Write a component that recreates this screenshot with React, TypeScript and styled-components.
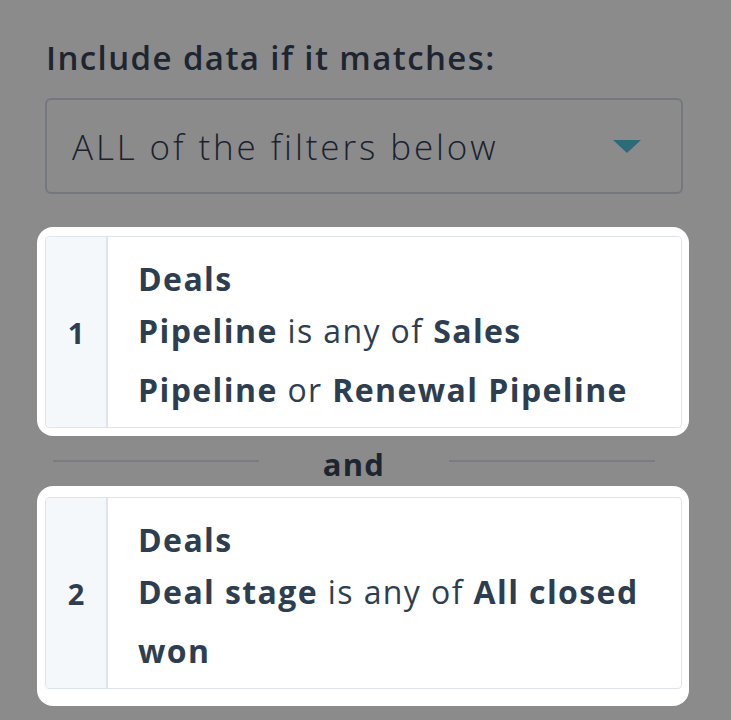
import React from 'react';
import styled, { createGlobalStyle } from 'styled-components';

const GlobalStyle = createGlobalStyle`
  html, body {
    margin: 0;
    padding: 0;
    background: #8b8b8b;
  }
  body {
    font-family: "Open Sans", "Noto Sans", sans-serif;
  }
`;

const Page = styled.div`
  width: 731px;
  height: 720px;
  box-sizing: border-box;
  padding: 35px 42px 0 37px;
  overflow: hidden;
  display: flex;
  flex-direction: column;
`;

const Heading = styled.h2`
  margin: 0 0 0 9px;
  font-size: 33px;
  line-height: 46px;
  font-weight: 600;
  letter-spacing: 1.4px;
  color: #1d2531;
`;

const Select = styled.div`
  margin: 17px 6px 33px 8px;
  height: 96px;
  box-sizing: border-box;
  border: 2px solid #74787e;
  border-radius: 6px;
  display: flex;
  align-items: center;
  justify-content: space-between;
  padding: 0 40px 0 25px;
  font-size: 35px;
  font-weight: 300;
  letter-spacing: 2.9px;
  color: #1a222d;
`;

const Caret = styled.span`
  width: 0;
  height: 0;
  border-left: 14px solid transparent;
  border-right: 14px solid transparent;
  border-top: 13px solid #2c6b78;
`;

const Highlight = styled.div<{ $pad: string }>`
  background: #fff;
  border-radius: 16px;
  padding: ${(p) => p.$pad};
`;

const FilterBox = styled.div`
  display: flex;
  border: 1.5px solid #dfe3eb;
  border-radius: 4px;
  overflow: hidden;
`;

const Index = styled.div`
  width: 60px;
  flex: none;
  background: #f5f8fa;
  border-right: 2px solid #dfe3eb;
  display: flex;
  align-items: center;
  justify-content: center;
  font-size: 29px;
  font-weight: 700;
  color: #2d3e50;
`;

const Body = styled.div`
  flex: 1;
  padding: 20px 26px 8px 30px;
  color: #2d3e50;
  font-size: 32px;
  letter-spacing: 1.4px;
`;

const Object = styled.div`
  font-weight: 700;
  line-height: 44px;
`;

const Rule = styled.p`
  margin: 0;
  font-weight: 400;
  line-height: 59px;

  b {
    font-weight: 700;
  }
`;

const Divider = styled.div`
  display: flex;
  align-items: center;
  margin: 8px 34px 2px 16px;
  height: 40px;
`;

const Line = styled.span`
  flex: 1;
  height: 2px;
  background: #797c81;
  margin-top: -6px;
`;

const Joiner = styled.span`
  width: 190px;
  text-align: center;
  font-size: 31px;
  font-weight: 700;
  letter-spacing: 1.2px;
  color: #1d2531;
`;

type Filter = { n: number; pad: string; rule: React.ReactNode };

const filters: Filter[] = [
  {
    n: 1,
    pad: '9px 7px 8px 8px',
    rule: (
      <>
        <b>Pipeline</b> is any of <b>Sales</b> <b>Pipeline</b> or <b>Renewal</b> <b>Pipeline</b>
      </>
    ),
  },
  {
    n: 2,
    pad: '11px 7px 17px 8px',
    rule: (
      <>
        <b>Deal stage</b> is any of <b>All closed</b> <b>won</b>
      </>
    ),
  },
];

const FilterCard = ({ n, pad, rule }: Filter) => (
  <Highlight $pad={pad}>
    <FilterBox>
      <Index>{n}</Index>
      <Body>
        <Object>Deals</Object>
        <Rule>{rule}</Rule>
      </Body>
    </FilterBox>
  </Highlight>
);

export default function App() {
  return (
    <>
      <GlobalStyle />
      <Page>
        <Heading>Include data if it matches:</Heading>
        <Select>
          ALL of the filters below
          <Caret />
        </Select>
        <FilterCard {...filters[0]} />
        <Divider>
          <Line />
          <Joiner>and</Joiner>
          <Line />
        </Divider>
        <FilterCard {...filters[1]} />
      </Page>
    </>
  );
}
